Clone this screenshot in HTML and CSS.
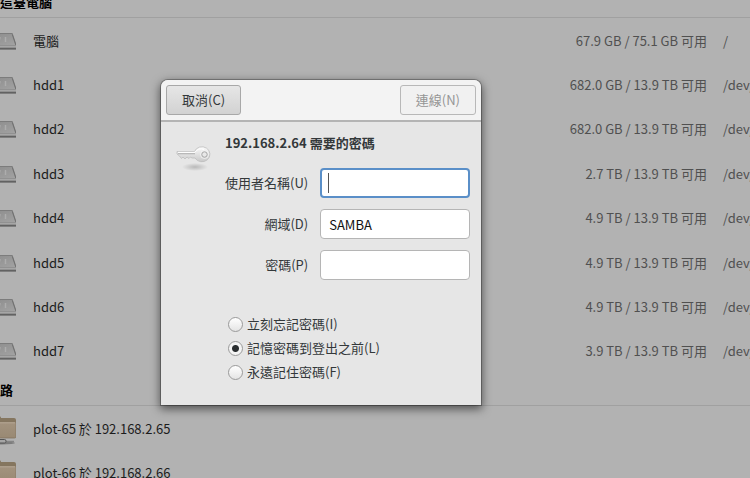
FILE: index.html
```
<!DOCTYPE html>
<html lang="zh-TW">
<head>
    <meta charset="UTF-8">
    <meta name="viewport" content="width=device-width, initial-scale=1.0">
    <title>其他位置</title>
    <link rel="stylesheet" href="styles.css">
</head>
<body>
    <!-- 共用圖示 -->
    <svg class="icon-defs" aria-hidden="true">
        <defs>
            <linearGradient id="drive-top" x1="0" y1="0" x2="1" y2="1">
                <stop offset="0" stop-color="#8a8a8a"/>
                <stop offset="1" stop-color="#a2a2a2"/>
            </linearGradient>
            <linearGradient id="folder-front" x1="0" y1="0" x2="0" y2="1">
                <stop offset="0" stop-color="#a3937f"/>
                <stop offset="1" stop-color="#998973"/>
            </linearGradient>
            <linearGradient id="key-body" x1="0" y1="0" x2="0" y2="1">
                <stop offset="0" stop-color="#fbfbfb"/>
                <stop offset="1" stop-color="#c8c8c8"/>
            </linearGradient>
            <radialGradient id="key-shadow">
                <stop offset="0" stop-color="#000" stop-opacity="0.2"/>
                <stop offset="1" stop-color="#000" stop-opacity="0"/>
            </radialGradient>
            <symbol id="drive" viewBox="0 0 32 32">
                <path d="M3.500 8H28.500L32.500 20V24.500H-.5V20z" fill="#7c7c7c"/>
                <path d="M4.500 9H28L31.500 20H.5z" fill="url(#drive-top)"/>
                <path d="M0 20.500H32V22.500H0z" fill="#a6a6a6"/>
                <path d="M28.300 9.500L31.800 20" stroke="#6c6c6c" stroke-width="0.800"/>
                <path d="M16 12l-1 5M21.500 12v5" stroke="#adadad" stroke-width="1.500" fill="none"/>
                <path d="M0 23.800h32" stroke="#5c5c5c" stroke-width="1.200"/>
            </symbol>
            <symbol id="folder" viewBox="0 0 32 32">
                <path d="M1 5q0-2 2-2h12q2 0 2 2h13q2 0 2 2V24H1z" fill="#85765f"/>
                <path d="M.5 9h31.500V23.500q0 1.500-1.500 1.500H2q-1.500 0-1.500-1.500z" fill="url(#folder-front)" stroke="#83745f" stroke-width="0.800"/>
                <path d="M2 9.800h29" stroke="#b7a896"/>
                <ellipse cx="18" cy="30" rx="13" ry="1.500" fill="#000" opacity="0.300"/>
                <path d="M8 28.500h22" stroke="#858585" stroke-width="1.500"/>
                <rect x="14" y="26.500" width="8" height="3.500" rx="1.500" fill="#a5a5a5" stroke="#555"/>
            </symbol>
        </defs>
    </svg>

    <main class="places">
        <section>
            <h2 class="places-title">在這臺電腦</h2>
            <table class="places-list drive-list">
                <tbody id="drives"></tbody>
            </table>
        </section>
        <section>
            <h2 class="places-title">網路</h2>
            <table class="places-list">
                <tbody id="networks"></tbody>
            </table>
        </section>
    </main>

    <form class="auth" role="dialog" aria-labelledby="auth-title" onsubmit="return false">
        <header class="auth-header">
            <button class="btn" type="button">取消(C)</button>
            <button class="btn" type="submit" disabled>連線(N)</button>
        </header>
        <div class="auth-body">
            <svg class="auth-key" viewBox="0 0 36 36" aria-hidden="true">
                <ellipse cx="19" cy="26" rx="13" ry="4" fill="url(#key-shadow)"/>
                <path d="M1 10.500H18.500A8 7.500 0 1 1 19 17H16l-1.500-1-1.500 1.500-2-1.500-2 2-2-2-1.500 1.500-2-2.500L1 13z" fill="url(#key-body)" stroke="#bcbcbc" stroke-width="0.800"/>
                <path d="M2 12.700H19" stroke="#b4b4b4" stroke-width="1.200"/>
                <path d="M2 11.400H19A6.500 6 0 0 1 28 8.500" stroke="#fff" fill="none"/>
                <circle cx="28.500" cy="13.500" r="4" fill="none" stroke="#f4f4f4" stroke-width="0.800"/>
                <circle cx="28.500" cy="13.500" r="2.700" fill="#e8e8e8" stroke="#a8a8a8"/>
            </svg>
            <div class="auth-content">
                <h1 class="auth-title" id="auth-title">192.168.2.64 需要的密碼</h1>
                <div class="fields">
                    <label for="user">使用者名稱(U)</label>
                    <div class="field focused"><input id="user" type="text"></div>
                    <label for="domain">網域(D)</label>
                    <div class="field"><input id="domain" type="text" value="SAMBA"></div>
                    <label for="password">密碼(P)</label>
                    <div class="field"><input id="password" type="password"></div>
                </div>
                <div class="remember">
                    <label><input type="radio" name="remember">立刻忘記密碼(I)</label>
                    <label><input type="radio" name="remember" checked>記憶密碼到登出之前(L)</label>
                    <label><input type="radio" name="remember">永遠記住密碼(F)</label>
                </div>
            </div>
        </div>
    </form>

    <script>
        const drives = [
            ['電腦', '67.9 GB / 75.1 GB 可用', '/'],
            ['hdd1', '682.0 GB / 13.9 TB 可用', '/dev/'],
            ['hdd2', '682.0 GB / 13.9 TB 可用', '/dev/'],
            ['hdd3', '2.7 TB / 13.9 TB 可用', '/dev/'],
            ['hdd4', '4.9 TB / 13.9 TB 可用', '/dev/'],
            ['hdd5', '4.9 TB / 13.9 TB 可用', '/dev/'],
            ['hdd6', '4.9 TB / 13.9 TB 可用', '/dev/'],
            ['hdd7', '3.9 TB / 13.9 TB 可用', '/dev/']
        ];
        const networks = [
            ['plot-65 於 192.168.2.65', '', ''],
            ['plot-66 於 192.168.2.66', '', '']
        ];

        function renderRows(id, icon, rows) {
            document.getElementById(id).innerHTML = rows.map(([name, size, path]) => `
                <tr>
                    <td class="col-icon"><svg class="place-icon"><use href="#${icon}"/></svg></td>
                    <td>${name}</td>
                    <td class="col-size">${size}</td>
                    <td class="col-path">${path}</td>
                </tr>
            `).join('');
        }

        renderRows('drives', 'drive', drives);
        renderRows('networks', 'folder', networks);
    </script>
</body>
</html>
```
FILE: styles.css
```
* {
    box-sizing: border-box;
}

body {
    margin: 0;
    min-height: 100vh;
    overflow: hidden;
    background: #b2b2b2;
    color: #1c1c1c;
    font-family: "Noto Sans CJK TC", sans-serif;
    font-size: 13px;
    line-height: 20px;
}

.icon-defs {
    position: absolute;
    width: 0;
    height: 0;
}

/* 位置清單，左上角已捲出視窗 */
.places {
    margin: -15px 0 0 -16px;
}

.places-title {
    margin: 0;
    padding: 7px 3px 5px;
    border-bottom: 1px solid #a0a0a0;
    color: #000;
    font-size: 13px;
    font-weight: bold;
}

.places-list {
    width: 100%;
    table-layout: fixed;
    border-collapse: collapse;
}

/* 八列平均分配高度 */
.drive-list {
    height: 355px;
}

.places-list td {
    height: 44px;
    padding: 1px 0 0;
    white-space: nowrap;
    overflow: hidden;
}

.places-list .col-icon {
    width: 49px;
}

.places-list .col-size {
    width: 180px;
    color: #505050;
    text-align: right;
}

.places-list .col-path {
    width: 43px;
    padding-left: 16px;
    color: #505050;
    text-overflow: clip;
}

.place-icon {
    display: block;
    width: 32px;
    height: 32px;
}

/* 密碼對話框 */
.auth {
    position: absolute;
    top: 80px;
    left: 161px;
    width: 320px;
    border-radius: 7px 7px 0 0;
    background: #e6e6e6;
    box-shadow: 0 0 0 1px rgba(0, 0, 0, 0.25), 0 3px 10px 1px rgba(0, 0, 0, 0.55);
    color: #33383a;
}

.auth-header {
    display: flex;
    justify-content: space-between;
    padding: 5px;
    border-bottom: 2px solid #b4b4b4;
    border-radius: 7px 7px 0 0;
    background: #f3f3f3;
}

.btn {
    height: 30px;
    padding: 0 15px;
    border: 1px solid #a8a8a8;
    border-radius: 3px;
    background: linear-gradient(#e6e6e6, #d2d2d2);
    color: #33383a;
    font: inherit;
}

.btn:disabled {
    border-color: #b8b8b8;
    background: #f1f1f1;
    color: #959595;
}

.auth-body {
    display: flex;
    gap: 13px;
    padding: 11px 11px 23px 15px;
}

.auth-key {
    flex: none;
    width: 36px;
    height: 36px;
    margin-top: 8px;
}

.auth-content {
    flex: 1;
}

.auth-title {
    margin: 0 0 15px;
    font-size: 13px;
    font-weight: bold;
}

.fields {
    display: grid;
    grid-template-columns: auto 1fr;
    align-items: center;
    gap: 11px 12px;
    text-align: right;
}

.field {
    position: relative;
}

.field input {
    display: block;
    width: 100%;
    height: 30px;
    padding: 0 8px;
    border: 1px solid #b5b5b5;
    border-radius: 4px;
    background: #fff;
    color: #111;
    font: inherit;
    outline: none;
}

.field.focused input {
    border: 2px solid #5a8fc8;
}

/* 輸入游標 */
.field.focused::after {
    content: "";
    position: absolute;
    top: 5px;
    left: 8px;
    width: 1px;
    height: 20px;
    background: #555;
}

.remember {
    display: flex;
    flex-direction: column;
    gap: 4px;
    margin: 34px 0 0 3px;
}

.remember label {
    display: flex;
    align-items: center;
    gap: 4px;
}

.remember input {
    width: 15px;
    height: 15px;
    margin: 0;
    appearance: none;
    border: 1px solid #9a9a9a;
    border-radius: 50%;
    background: linear-gradient(#fff, #e4e4e4);
}

.remember input:checked {
    background: radial-gradient(circle, #2a2e30 3px, #f4f4f4 4px);
}
```
